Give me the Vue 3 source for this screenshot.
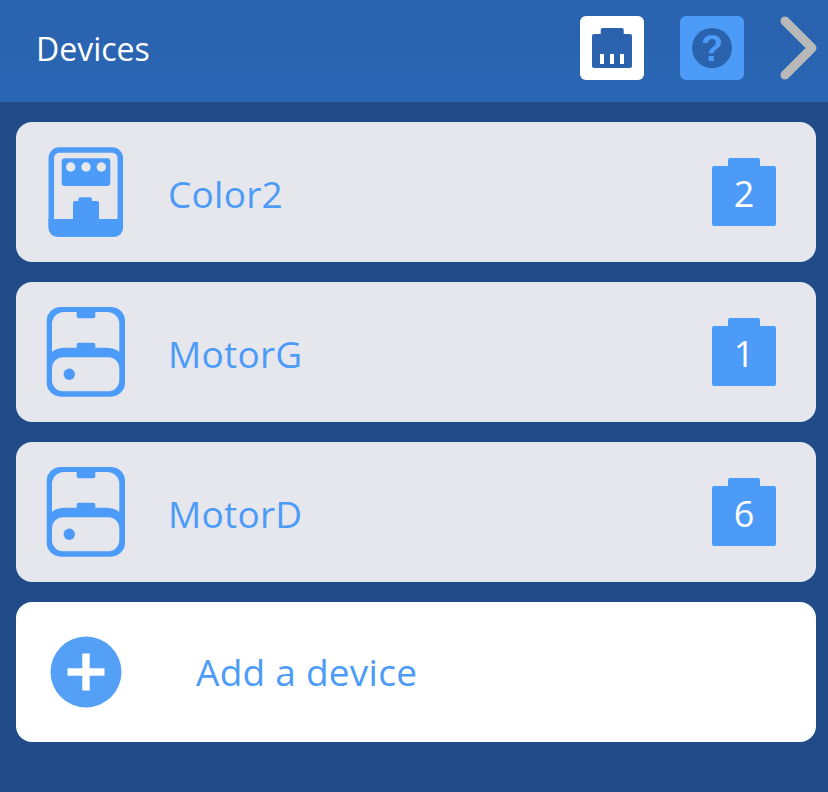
<script setup>
const devices = [
  { name: 'Color2', port: '2', kind: 'color' },
  { name: 'MotorG', port: '1', kind: 'motor' },
  { name: 'MotorD', port: '6', kind: 'motor' },
]
</script>

<template>
  <div class="page">
    <header class="top">
      <span class="title">Devices</span>
      <button class="tool tool-on">
        <svg width="64" height="64" viewBox="0 0 64 64">
          <path fill="#2a62ad" fill-rule="evenodd" d="M20.7 14a2 2 0 0 1 2-2h19a2 2 0 0 1 2 2v4h6.300a2 2 0 0 1 2 2v30a2 2 0 0 1-2 2H14a2 2 0 0 1-2-2V20a2 2 0 0 1 2-2h6.700z M20 38v10h4V38z M30 38v10h4V38z M40 38v10h4V38z" />
        </svg>
      </button>
      <button class="tool tool-help">
        <svg width="64" height="64" viewBox="0 0 64 64">
          <circle cx="32" cy="32" r="20" fill="#2a62ad" />
          <text x="32" y="45" class="qmark">?</text>
        </svg>
      </button>
      <svg class="chev" width="38" height="64" viewBox="0 0 38 64">
        <path d="M5 5 L32 32 L5 59" fill="none" stroke="#b9b9b9" stroke-width="9" stroke-linecap="round" stroke-linejoin="round" />
      </svg>
    </header>

    <main class="list">
      <div v-for="d in devices" :key="d.name" class="card">
        <div class="dev-icon">
          <svg v-if="d.kind === 'color'" width="80" height="90" viewBox="0 0 80 90">
            <rect x="5.300" y="3" width="69" height="84" rx="8" fill="none" stroke="#4c9bf8" stroke-width="5.500" />
            <path fill="#4c9bf8" d="M2.500 72h74.500v9a8.700 8.700 0 0 1-8.700 8.700H11.200a8.700 8.700 0 0 1-8.700-8.700z" />
            <rect x="15.700" y="11.300" width="48.600" height="27.700" rx="3" fill="#4c9bf8" />
            <circle cx="24.700" cy="20" r="4.700" fill="#e6e7ec" />
            <circle cx="40" cy="20" r="4.700" fill="#e6e7ec" />
            <circle cx="55.300" cy="20" r="4.700" fill="#e6e7ec" />
            <path fill="#4c9bf8" d="M27 75V56a2 2 0 0 1 2-2h3.300v-1.700a2 2 0 0 1 2-2H44a2 2 0 0 1 2 2V54h5a2 2 0 0 1 2 2v19z" />
          </svg>
          <svg v-else width="80" height="90" viewBox="0 0 80 90">
            <path fill="#4c9bf8" fill-rule="evenodd" d="M14.700 0h50.300a14 14 0 0 1 14 14v61.700a14 14 0 0 1-14 14H14.700a14 14 0 0 1-14-14V14a14 14 0 0 1 14-14z M6 17V45Q9 41.500 18 40.700H61Q70 41.500 73.300 45V17a12 12 0 0 0-12-12H18a12 12 0 0 0-12 12z M17 50.300a11 11 0 0 0-11 11v12a11 11 0 0 0 11 11h45.300a11 11 0 0 0 11-11v-12a11 11 0 0 0-11-11z" />
            <path fill="#4c9bf8" d="M30.700 3h18.600v6.300a2 2 0 0 1-2 2H32.700a2 2 0 0 1-2-2z" />
            <path fill="#4c9bf8" d="M30.700 42v-4.300a2 2 0 0 1 2-2h14.600a2 2 0 0 1 2 2V42z" />
            <circle cx="23.300" cy="67.300" r="5.700" fill="#4c9bf8" />
          </svg>
        </div>
        <span class="name">{{ d.name }}</span>
        <div class="port">
          <span class="port-tab"></span>
          <span class="port-body">{{ d.port }}</span>
        </div>
      </div>

      <div class="card card-add">
        <div class="plus">
          <svg width="72" height="72" viewBox="0 0 72 72">
            <circle cx="36" cy="36" r="35.500" fill="#53a0f6" />
            <path fill="#fff" d="M32.300 17.500h7.400v14.800h14.800v7.400H39.700v14.800h-7.400V39.700H17.500v-7.400h14.800z" />
          </svg>
        </div>
        <span class="name">Add a device</span>
      </div>
    </main>
  </div>
</template>

<style>
html, body {
  margin: 0;
  background: #204b88;
}
</style>

<style scoped>
.page {
  width: 828px;
  height: 792px;
  overflow: hidden;
  background: #204b88;
  font-family: "Open Sans", "Noto Sans", sans-serif;
}

.top {
  height: 102px;
  box-sizing: border-box;
  display: flex;
  align-items: flex-start;
  padding: 16px 10px 0 36px;
  background: linear-gradient(#2a63af, #2a66b4);
}

.title {
  flex: 1;
  color: #fff;
  font-size: 32px;
  line-height: 65px;
  white-space: nowrap;
}

.tool {
  width: 64px;
  height: 64px;
  padding: 0;
  border: 0;
  border-radius: 6px;
  display: block;
}

.tool svg {
  display: block;
}

.tool-on {
  background: #fff;
  margin-right: 36px;
}

.tool-help {
  background: #4c9bf8;
  margin-right: 36px;
}

.qmark {
  fill: #4c9bf8;
  font-size: 36px;
  font-weight: 700;
  text-anchor: middle;
  font-family: "Liberation Sans", sans-serif;
}

.chev {
  display: block;
}

.list {
  padding: 20px 12px 0 16px;
  display: flex;
  flex-direction: column;
  gap: 20px;
}

.card {
  height: 140px;
  box-sizing: border-box;
  border-radius: 16px;
  background: #e6e7ec;
  display: flex;
  align-items: center;
  padding: 0 40px 0 30px;
}

.dev-icon {
  width: 80px;
  height: 90px;
  margin-right: 42px;
}

.dev-icon svg,
.plus svg {
  display: block;
}

.name {
  flex: 1;
  color: #4c9bf8;
  font-size: 37px;
  letter-spacing: 0.25px;
  line-height: 54px;
  padding-top: 4px;
  white-space: nowrap;
}

.port {
  width: 64px;
  display: flex;
  flex-direction: column;
  align-items: center;
}

.port-tab {
  width: 32px;
  height: 8px;
  background: #4c9bf8;
  border-radius: 2px 2px 0 0;
}

.port-body {
  width: 64px;
  height: 60px;
  background: #4c9bf8;
  border-radius: 2px;
  color: #fff;
  font-size: 36px;
  line-height: 56px;
  text-align: center;
}

.card-add {
  background: #fff;
  padding-left: 34px;
}

.plus {
  width: 72px;
  height: 72px;
  margin-right: 74px;
}

.card-add .name {
  padding-top: 0;
}
</style>
